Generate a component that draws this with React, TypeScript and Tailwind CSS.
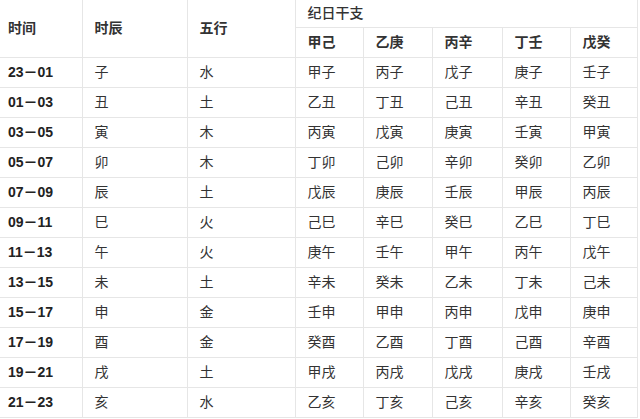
const rows: [string, string, string, string[]][] = [
  ["23－01", "子", "水", ["甲子", "丙子", "戊子", "庚子", "壬子"]],
  ["01－03", "丑", "土", ["乙丑", "丁丑", "己丑", "辛丑", "癸丑"]],
  ["03－05", "寅", "木", ["丙寅", "戊寅", "庚寅", "壬寅", "甲寅"]],
  ["05－07", "卯", "木", ["丁卯", "己卯", "辛卯", "癸卯", "乙卯"]],
  ["07－09", "辰", "土", ["戊辰", "庚辰", "壬辰", "甲辰", "丙辰"]],
  ["09－11", "巳", "火", ["己巳", "辛巳", "癸巳", "乙巳", "丁巳"]],
  ["11－13", "午", "火", ["庚午", "壬午", "甲午", "丙午", "戊午"]],
  ["13－15", "未", "土", ["辛未", "癸未", "乙未", "丁未", "己未"]],
  ["15－17", "申", "金", ["壬申", "甲申", "丙申", "戊申", "庚申"]],
  ["17－19", "酉", "金", ["癸酉", "乙酉", "丁酉", "己酉", "辛酉"]],
  ["19－21", "戌", "土", ["甲戌", "丙戌", "戊戌", "庚戌", "壬戌"]],
  ["21－23", "亥", "水", ["乙亥", "丁亥", "己亥", "辛亥", "癸亥"]],
];

const stems = ["甲己", "乙庚", "丙辛", "丁壬", "戊癸"];

const App = () => {
  return (
    <div
      className="w-[640px] h-[419px] bg-white overflow-hidden text-[14px] text-[#333]"
      style={{ fontFamily: '"Liberation Sans", "Noto Sans CJK SC", sans-serif' }}
    >
      <table className="border-collapse table-fixed w-[637px]">
        <colgroup>
          <col className="w-[82px]" />
          <col className="w-[105px]" />
          <col className="w-[108px]" />
          <col className="w-[68px]" />
          <col className="w-[69px]" />
          <col className="w-[70px]" />
          <col className="w-[68px]" />
          <col className="w-[67px]" />
        </colgroup>
        <thead>
          <tr className="h-[27px]">
            <th rowSpan={2} className="text-left font-bold pl-2 border-b border-r border-[#e6e6e6]">时间</th>
            <th rowSpan={2} className="text-left font-bold pl-3 border-b border-r border-[#e6e6e6]">时辰</th>
            <th rowSpan={2} className="text-left font-bold pl-3 border-b border-r border-[#e6e6e6]">五行</th>
            <th colSpan={5} className="text-left font-medium pl-3 border-b border-r border-[#e6e6e6]">纪日干支</th>
          </tr>
          <tr className="h-[30px]">
            {stems.map((s) => (
              <th key={s} className="text-left font-bold pl-3 border-b border-r border-[#e6e6e6]">{s}</th>
            ))}
          </tr>
        </thead>
        <tbody>
          {rows.map(([time, branch, element, days]) => (
            <tr key={time} className="h-[30px]">
              <td className="pl-2 font-bold text-[#222] border-b border-r border-[#e6e6e6]">{time}</td>
              <td className="pl-3 border-b border-r border-[#e6e6e6]">{branch}</td>
              <td className="pl-3 border-b border-r border-[#e6e6e6]">{element}</td>
              {days.map((d) => (
                <td key={d} className="pl-3 border-b border-r border-[#e6e6e6]">{d}</td>
              ))}
            </tr>
          ))}
        </tbody>
      </table>
    </div>
  );
};

export default App;
